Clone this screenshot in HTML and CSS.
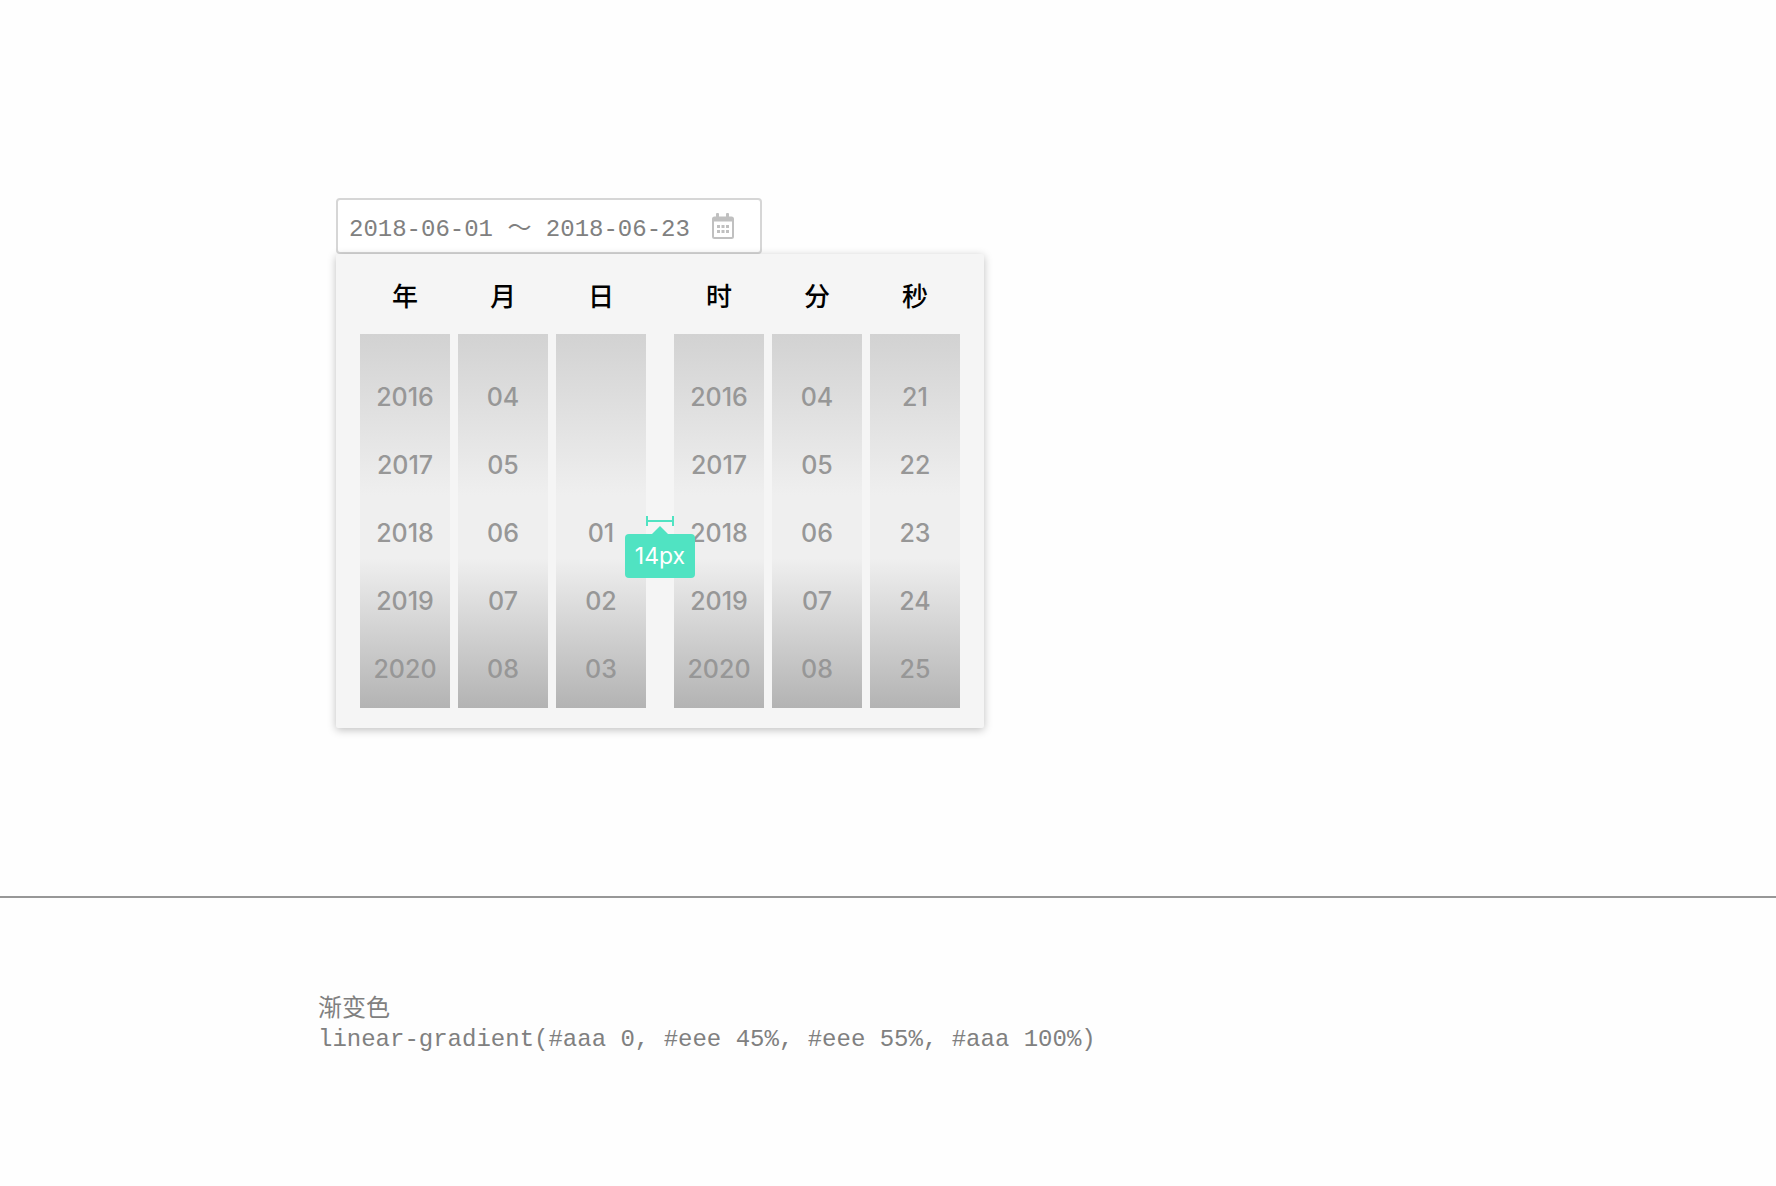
FILE: index.html
```html
<!DOCTYPE html>
<html lang="zh-CN">
<head>
  <meta charset="utf-8">
  <meta name="viewport" content="width=device-width, initial-scale=1">
  <title>日期时间选择器</title>
  <link rel="stylesheet" href="styles.css">
</head>
<body>
  <main>
    <section class="demo">
      <div class="field">
        <input class="field-input" type="text" value="2018-06-01 ～ 2018-06-23" aria-label="日期范围">
        <button class="field-button" type="button" aria-label="打开日历">
          <svg width="24" height="28" viewBox="0 0 24 28" aria-hidden="true">
            <path fill="#c0c0c0" fill-rule="evenodd" d="M5 2a1 1 0 0 1 1-1h1a1 1 0 0 1 1 1v2.500h7V2a1 1 0 0 1 1-1h1a1 1 0 0 1 1 1v2.500h2.500A2.500 2.500 0 0 1 23 7v17.500a2.500 2.500 0 0 1-2.500 2.500h-17A2.500 2.500 0 0 1 1 24.500V7A2.500 2.500 0 0 1 3.500 4.500H5zM3 9.500v15a.5.5 0 0 0 .5.5h17a.5.5 0 0 0 .5-.5v-15z"/>
            <path fill="#c0c0c0" d="M6 13h3v3H6zM10.500 13h3v3h-3zM15 13h3v3h-3zM6 18h3v3H6zM10.500 18h3v3h-3zM15 18h3v3h-3z"/>
          </svg>
        </button>
      </div>

      <div class="picker">
        <div class="group">
          <div class="column">
            <h2 class="unit">年</h2>
            <ul class="wheel"><li>2016</li><li>2017</li><li>2018</li><li>2019</li><li>2020</li></ul>
          </div>
          <div class="column">
            <h2 class="unit">月</h2>
            <ul class="wheel"><li>04</li><li>05</li><li>06</li><li>07</li><li>08</li></ul>
          </div>
          <div class="column">
            <h2 class="unit">日</h2>
            <ul class="wheel"><li></li><li></li><li>01</li><li>02</li><li>03</li></ul>
          </div>
        </div>
        <div class="gutter">
          <div class="measure">
            <div class="measure-bar"></div>
            <div class="measure-label">14px</div>
          </div>
        </div>
        <div class="group">
          <div class="column">
            <h2 class="unit">时</h2>
            <ul class="wheel"><li>2016</li><li>2017</li><li>2018</li><li>2019</li><li>2020</li></ul>
          </div>
          <div class="column">
            <h2 class="unit">分</h2>
            <ul class="wheel"><li>04</li><li>05</li><li>06</li><li>07</li><li>08</li></ul>
          </div>
          <div class="column">
            <h2 class="unit">秒</h2>
            <ul class="wheel"><li>21</li><li>22</li><li>23</li><li>24</li><li>25</li></ul>
          </div>
        </div>
      </div>
    </section>

    <section class="notes">
      <p>渐变色</p>
      <p>linear-gradient(#aaa 0, #eee 45%, #eee 55%, #aaa 100%)</p>
    </section>
  </main>
</body>
</html>
```
FILE: styles.css
```css
* {
  box-sizing: border-box;
}

body {
  margin: 0;
  background: #fefefe;
  font-family: Inter, "Noto Sans CJK SC", sans-serif;
}

.demo {
  padding: 198px 24px 168px 336px;
  border-bottom: 2px solid #979797;
}

/* Date range field */
.field {
  display: flex;
  align-items: center;
  max-width: 426px;
  height: 56px;
  padding: 0 25px 0 11px;
  border: 2px solid #d6d6d6;
  border-radius: 4px;
  background: #fff;
}

.field-input {
  flex: 1;
  min-width: 0;
  height: 52px;
  padding: 0 0 2px;
  border: 0;
  outline: 0;
  background: none;
  color: #808080;
  font: 24px "Liberation Mono", "Noto Sans CJK SC", monospace;
}

.field-button {
  display: flex;
  padding: 0;
  border: 0;
  background: none;
  cursor: pointer;
}

/* Drop-down panel */
.picker {
  position: relative;
  display: flex;
  max-width: 648px;
  padding: 4px 24px 20px;
  border-radius: 2px;
  background: #f5f5f5;
  box-shadow: 0 2px 8px rgba(0, 0, 0, 0.25);
}

.group {
  display: flex;
  flex: 1;
  gap: 8px;
}

.column {
  flex: 1;
}

.unit {
  margin: 0;
  padding-bottom: 2px;
  color: #000;
  font-family: "Noto Sans CJK SC", sans-serif;
  font-size: 26px;
  font-weight: 500;
  line-height: 74px;
  text-align: center;
}

.wheel {
  margin: 0;
  padding: 29px 0 5px;
  list-style: none;
  background: linear-gradient(#d2d2d2 0, #efefef 43%, #efefef 60%, #b3b3b3 100%);
  color: #979797;
  font-size: 25px;
  font-weight: 500;
  line-height: 68px;
  text-align: center;
}

.wheel li {
  height: 68px;
}

.gutter {
  position: relative;
  width: 28px;
}

/* Spacing annotation laid over the gutter */
.measure {
  position: absolute;
  z-index: 1;
  top: 258px;
  left: -22px;
  display: flex;
  flex-direction: column;
  align-items: center;
  width: 72px;
}

.measure-bar {
  width: 28px;
  height: 10px;
  border: solid #50e3c2;
  border-width: 0 2px;
  background: linear-gradient(#50e3c2, #50e3c2) center / 100% 2px no-repeat;
}

.measure-label {
  position: relative;
  width: 70px;
  margin-top: 8px;
  border-radius: 4px;
  background: #50e3c2;
  color: #fff;
  font-size: 23px;
  font-weight: 400;
  line-height: 44px;
  text-align: center;
}

.measure-label::before {
  content: "";
  position: absolute;
  top: -8px;
  left: 50%;
  margin-left: -8px;
  border: solid transparent;
  border-width: 0 8px 8px;
  border-bottom-color: #50e3c2;
}

/* Notes */
.notes {
  padding: 97px 24px 40px 318px;
  color: #808080;
  font: 24px/30px "Liberation Mono", "Noto Sans CJK SC", monospace;
}

.notes p {
  margin: 0;
}
```
